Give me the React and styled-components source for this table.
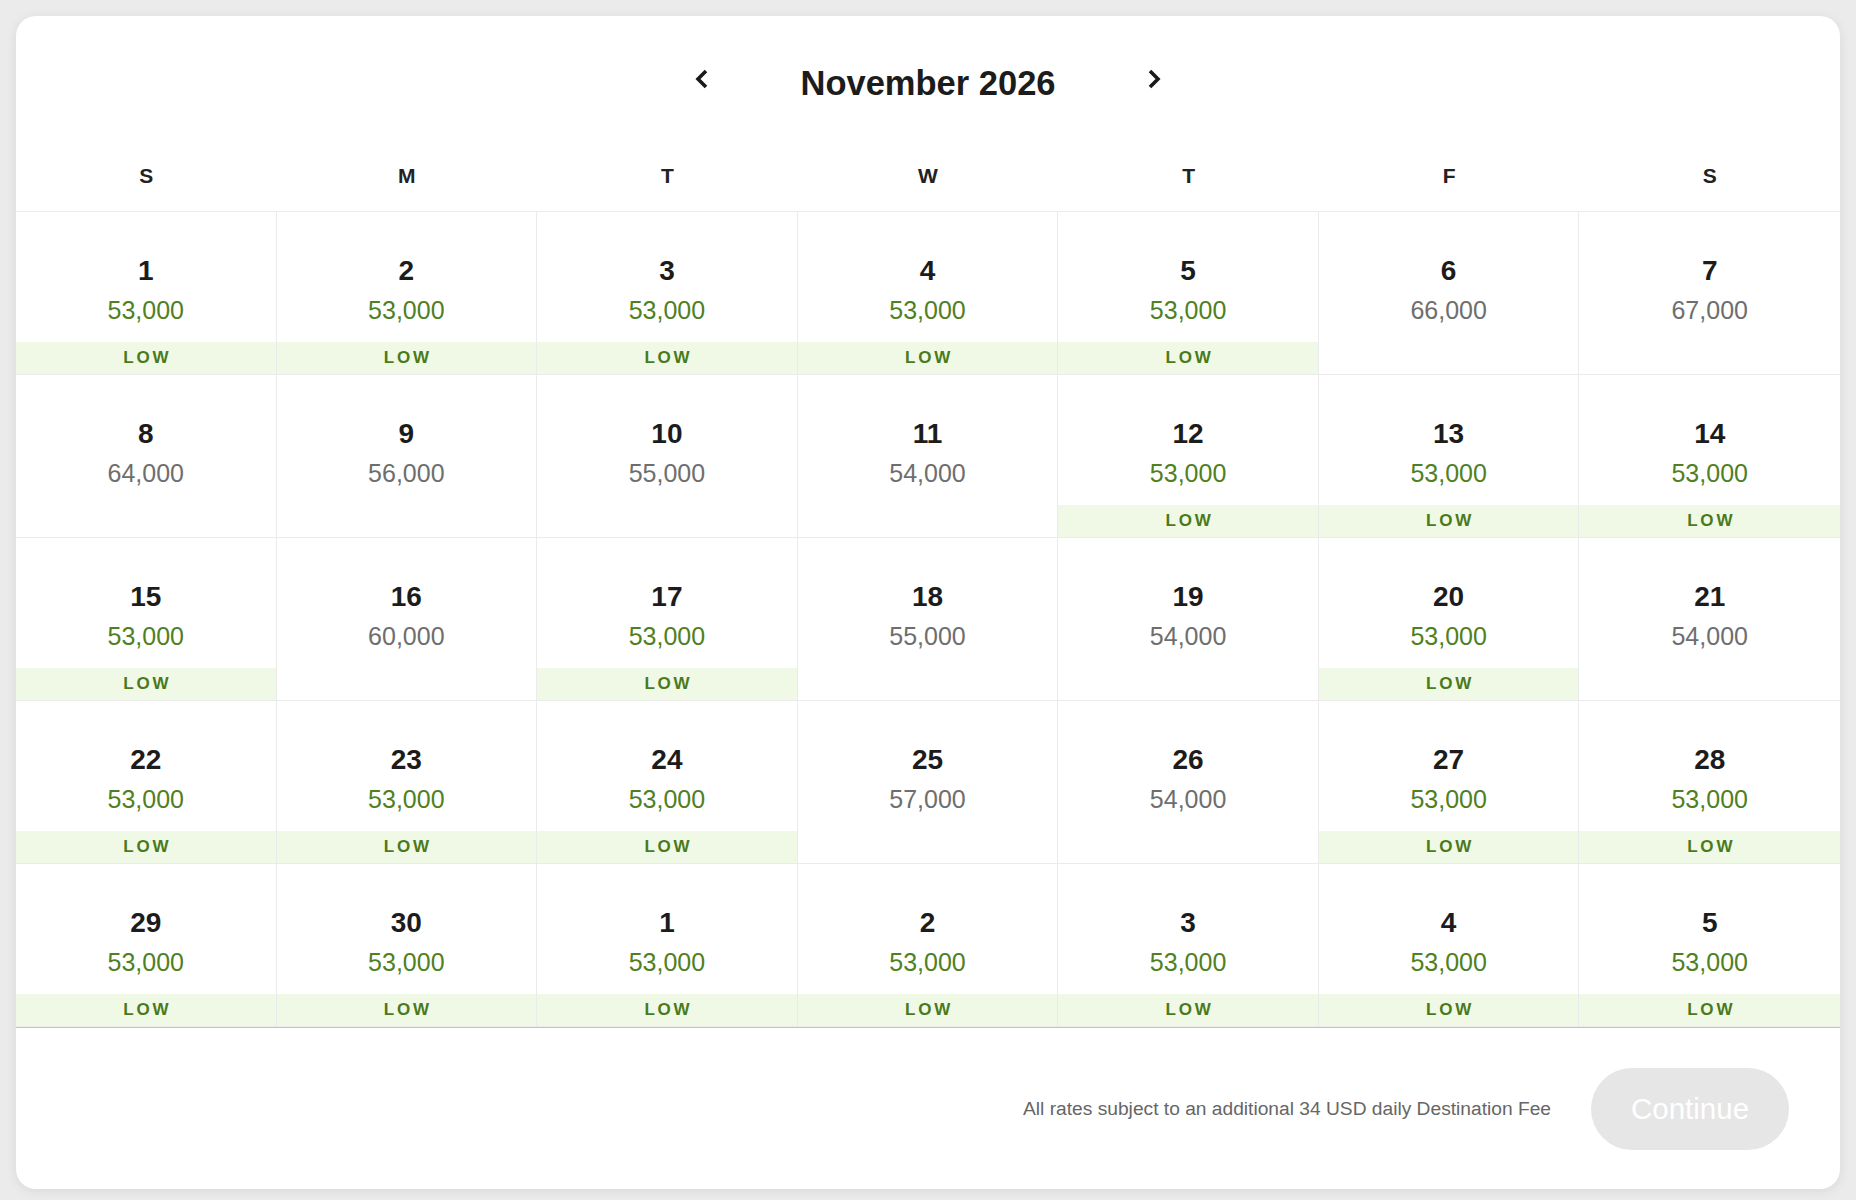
import React from 'react'
import styled, { createGlobalStyle } from 'styled-components'

const GlobalStyle = createGlobalStyle`
  body {
    margin: 0;
    background: #ebebeb;
    font-family: 'Liberation Sans', Arial, Helvetica, sans-serif;
    color: #1c1c1c;
  }
`

const Page = styled.div`
  padding: 16px 16px 12px;
`

const Card = styled.div`
  background: #fff;
  border-radius: 20px;
  box-shadow: 0 2px 12px rgba(0, 0, 0, 0.08);
  overflow: hidden;
`

const MonthNav = styled.header`
  display: flex;
  justify-content: center;
  align-items: flex-start;
  padding-top: 43px;
`

const NavButton = styled.button`
  display: flex;
  align-items: center;
  justify-content: center;
  width: 44px;
  height: 40px;
  padding: 0;
  border: none;
  background: none;
  cursor: pointer;
`

const MonthTitle = styled.h2`
  width: 408px;
  margin: 0;
  font-size: 34.5px;
  font-weight: 700;
  line-height: 48px;
  text-align: center;
  color: #1c1c1c;
`

const WeekRow = styled.div`
  display: grid;
  grid-template-columns: repeat(7, 1fr);
  margin-top: 57px;
  padding-bottom: 23px;
  border-bottom: 1px solid #ebebeb;
`

const WeekDay = styled.div`
  font-size: 21px;
  font-weight: 700;
  line-height: 24px;
  text-align: center;
  color: #222;
`

const Grid = styled.div`
  display: grid;
  grid-template-columns: repeat(7, 1fr);
  border-bottom: 1px solid #c4c4c4;
`

const Cell = styled.div`
  display: flex;
  flex-direction: column;
  height: 163px;
  box-sizing: border-box;
  border-right: 1px solid #ebebeb;
  border-bottom: 1px solid #ebebeb;
  text-align: center;

  &:nth-child(7n) {
    border-right: none;
  }
`

const DateNum = styled.div`
  margin-top: 44px;
  font-size: 28px;
  font-weight: 700;
  line-height: 29px;
  color: #1c1c1c;
`

const Price = styled.div`
  margin-top: 9.5px;
  font-size: 25px;
  line-height: 30px;
  color: ${({ $low }) => ($low ? '#4f8021' : '#6e6e6e')};
`

const LowBand = styled.div`
  margin-top: auto;
  height: 32px;
  padding-left: 3px;
  background: #f0f9e6;
  font-size: 17px;
  font-weight: 700;
  line-height: 32px;
  letter-spacing: 2.8px;
  color: #4a7a1b;
`

const Footer = styled.footer`
  display: flex;
  justify-content: flex-end;
  align-items: center;
  gap: 40px;
  padding: 40px 51px 39px;
`

const Note = styled.p`
  margin: 0;
  font-size: 19.2px;
  color: #666;
`

const ContinueButton = styled.button`
  width: 198px;
  height: 82px;
  border: none;
  border-radius: 41px;
  background: #e6e6e6;
  color: #fff;
  font-family: inherit;
  font-size: 29.5px;
  cursor: not-allowed;
`

const Chevron = ({ dir }) => (
  <svg width="16" height="24" viewBox="0 0 16 24" fill="none">
    <polyline
      points={dir === 'left' ? '12,4 4,12 12,20' : '4,4 12,12 4,20'}
      stroke="#1a1a1a"
      strokeWidth="3.6"
      strokeLinejoin="miter"
    />
  </svg>
)

const weekdays = ['S', 'M', 'T', 'W', 'T', 'F', 'S']

const prices = [
  53, 53, 53, 53, 53, 66, 67,
  64, 56, 55, 54, 53, 53, 53,
  53, 60, 53, 55, 54, 53, 54,
  53, 53, 53, 57, 54, 53, 53,
  53, 53, 53, 53, 53, 53, 53,
]

const days = prices.map((p, i) => ({
  day: i < 30 ? i + 1 : i - 29,
  price: `${p},000`,
  low: p === 53,
}))

const App = () => {
  return (
    <Page>
      <GlobalStyle />
      <Card>
        <MonthNav>
          <NavButton aria-label="Previous month">
            <Chevron dir="left" />
          </NavButton>
          <MonthTitle>November 2026</MonthTitle>
          <NavButton aria-label="Next month">
            <Chevron dir="right" />
          </NavButton>
        </MonthNav>
        <WeekRow>
          {weekdays.map((d, i) => (
            <WeekDay key={i}>{d}</WeekDay>
          ))}
        </WeekRow>
        <Grid>
          {days.map((d, i) => (
            <Cell key={i}>
              <DateNum>{d.day}</DateNum>
              <Price $low={d.low}>{d.price}</Price>
              {d.low && <LowBand>LOW</LowBand>}
            </Cell>
          ))}
        </Grid>
        <Footer>
          <Note>All rates subject to an additional 34 USD daily Destination Fee</Note>
          <ContinueButton disabled>Continue</ContinueButton>
        </Footer>
      </Card>
    </Page>
  )
}

export default App
